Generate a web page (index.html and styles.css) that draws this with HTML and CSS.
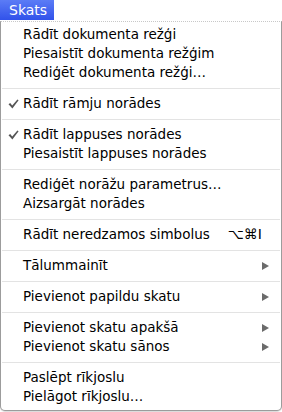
FILE: index.html
```html
<!DOCTYPE html>
<html lang="lv">
<head>
<meta charset="utf-8">
<title>Skats</title>
<link rel="stylesheet" href="styles.css">
</head>
<body>
<div class="menubar"><span class="title">Skats</span></div>
<div class="menu">
  <div class="group">
    <div class="item"><span class="label">Rādīt dokumenta režģi</span></div>
    <div class="item"><span class="label">Piesaistīt dokumenta režģim</span></div>
    <div class="item"><span class="label">Rediģēt dokumenta režģi…</span></div>
  </div>
  <div class="sep"></div>
  <div class="group">
    <div class="item"><svg class="check" viewBox="0 0 11 10" width="11" height="10"><path d="M0.5 5.2 L2.2 4 L4.2 6.6 L9.4 0.4 L10.6 1.3 L4.4 9.4 Z" fill="#555"/></svg><span class="label">Rādīt rāmju norādes</span></div>
  </div>
  <div class="sep"></div>
  <div class="group">
    <div class="item"><svg class="check" viewBox="0 0 11 10" width="11" height="10"><path d="M0.5 5.2 L2.2 4 L4.2 6.6 L9.4 0.4 L10.6 1.3 L4.4 9.4 Z" fill="#555"/></svg><span class="label">Rādīt lappuses norādes</span></div>
    <div class="item"><span class="label">Piesaistīt lappuses norādes</span></div>
  </div>
  <div class="sep"></div>
  <div class="group">
    <div class="item"><span class="label">Rediģēt norāžu parametrus…</span></div>
    <div class="item"><span class="label">Aizsargāt norādes</span></div>
  </div>
  <div class="sep"></div>
  <div class="group">
    <div class="item"><span class="label">Rādīt neredzamos simbolus</span><span class="shortcut">⌥⌘I</span></div>
  </div>
  <div class="sep"></div>
  <div class="group">
    <div class="item"><span class="label">Tālummainīt</span><span class="arrow"></span></div>
  </div>
  <div class="sep"></div>
  <div class="group">
    <div class="item"><span class="label">Pievienot papildu skatu</span><span class="arrow"></span></div>
  </div>
  <div class="sep"></div>
  <div class="group">
    <div class="item"><span class="label">Pievienot skatu apakšā</span><span class="arrow"></span></div>
    <div class="item"><span class="label">Pievienot skatu sānos</span><span class="arrow"></span></div>
  </div>
  <div class="sep"></div>
  <div class="group">
    <div class="item"><span class="label">Paslēpt rīkjoslu</span></div>
    <div class="item"><span class="label">Pielāgot rīkjoslu…</span></div>
  </div>
</div>
</body>
</html>
```

FILE: styles.css
```css
html, body {
  margin: 0;
  padding: 0;
  background: #ffffff;
}
body {
  width: 282px;
  height: 412px;
  overflow: hidden;
  font-family: "DejaVu Sans", "Liberation Sans", sans-serif;
  color: #000;
}
.menubar {
  height: 21px;
  display: flex;
  align-items: flex-start;
}
.title {
  display: block;
  height: 20px;
  width: 54px;
  box-sizing: border-box;
  padding-left: 9px;
  background: linear-gradient(#5b7cf6, #3152ea);
  color: #fff;
  font-size: 14px;
  line-height: 20px;
}
.menu {
  width: 282px;
  box-sizing: border-box;
  border: 1px solid #9c9c9c;
  border-top: 1px dotted #c8c8c8;
  border-radius: 0 0 5px 5px;
  padding: 3px 0 4px;
  background: #fff;
  box-shadow: 0 1px 1px rgba(0,0,0,0.15);
}
.item {
  height: 19px;
  display: flex;
  align-items: center;
  position: relative;
  padding-left: 22px;
  padding-right: 11px;
  font-size: 13.5px;
  line-height: 19px;
}
.label {
  flex: 1;
  white-space: nowrap;
}
.check {
  position: absolute;
  left: 7px;
  top: 5px;
}
.shortcut {
  margin-right: 8px;
  color: #000;
  font-size: 14px;
}
.arrow {
  width: 0;
  height: 0;
  border-top: 4px solid transparent;
  border-bottom: 4px solid transparent;
  border-left: 7px solid #6b6b6b;
  margin-right: 1px;
}
.sep {
  height: 12px;
  display: flex;
  align-items: center;
}
.sep::before {
  content: "";
  display: block;
  flex: 1;
  height: 1px;
  margin: 0 1px;
  background: #e3e3e3;
}
```
